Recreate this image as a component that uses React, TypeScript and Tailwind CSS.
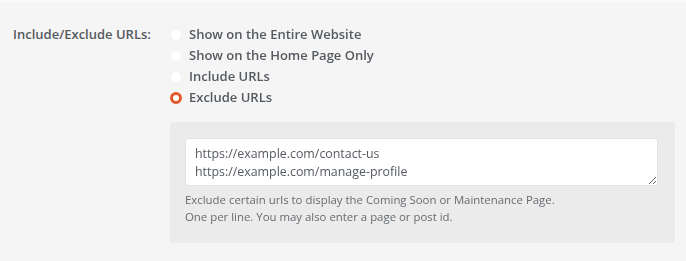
import { useState } from 'react';

const OPTIONS = [
  { id: 'all', label: 'Show on the Entire Website' },
  { id: 'home', label: 'Show on the Home Page Only' },
  { id: 'include', label: 'Include URLs' },
  { id: 'exclude', label: 'Exclude URLs' },
];

export default function App() {
  const [mode, setMode] = useState('exclude');
  const [urls, setUrls] = useState('https://example.com/contact-us\nhttps://example.com/manage-profile');

  return (
    <div className="w-[686px] h-[261px] bg-[#f5f5f5] border-t-2 border-[#fafafa] font-['Open_Sans',sans-serif] text-[#555a60]">
      <div className="flex pt-[22px] pl-[13px]">
        <div className="w-[157px] text-[13px] font-semibold leading-[21px]">Include/Exclude URLs:</div>
        <div className="flex-1 pr-[8px]">
          <div className="flex flex-col">
            {OPTIONS.map((o) => (
              <label key={o.id} className="flex items-center gap-[7px] h-[21px] text-[13px] font-semibold cursor-pointer">
                <span
                  onClick={() => setMode(o.id)}
                  className={
                    mode === o.id
                      ? 'w-[12px] h-[12px] rounded-full border-[3.5px] border-[#e0582b] bg-white'
                      : 'w-[12px] h-[12px] rounded-full border border-[#f0f0f0] bg-white'
                  }
                />
                <span>{o.label}</span>
              </label>
            ))}
          </div>

          {mode === 'exclude' && (
            <div className="mt-[14px] mr-[3px] bg-[#ecebec] rounded-[3px] pt-[16px] pb-[18px] pl-[15px] pr-[17px]">
              <textarea
                value={urls}
                onChange={(e) => setUrls(e.target.value)}
                className="block w-full h-[48px] bg-white border border-[#e2e2e2] rounded-[3px] px-[9px] py-[6px] text-[12.4px] leading-[18px] text-[#555a60] outline-none"
              />
              <p className="mt-[5px] text-[11.4px] leading-[17px] text-[#666b70]">
                Exclude certain urls to display the Coming Soon or Maintenance Page.
                <br />
                One per line. You may also enter a page or post id.
              </p>
            </div>
          )}
        </div>
      </div>
    </div>
  );
}
